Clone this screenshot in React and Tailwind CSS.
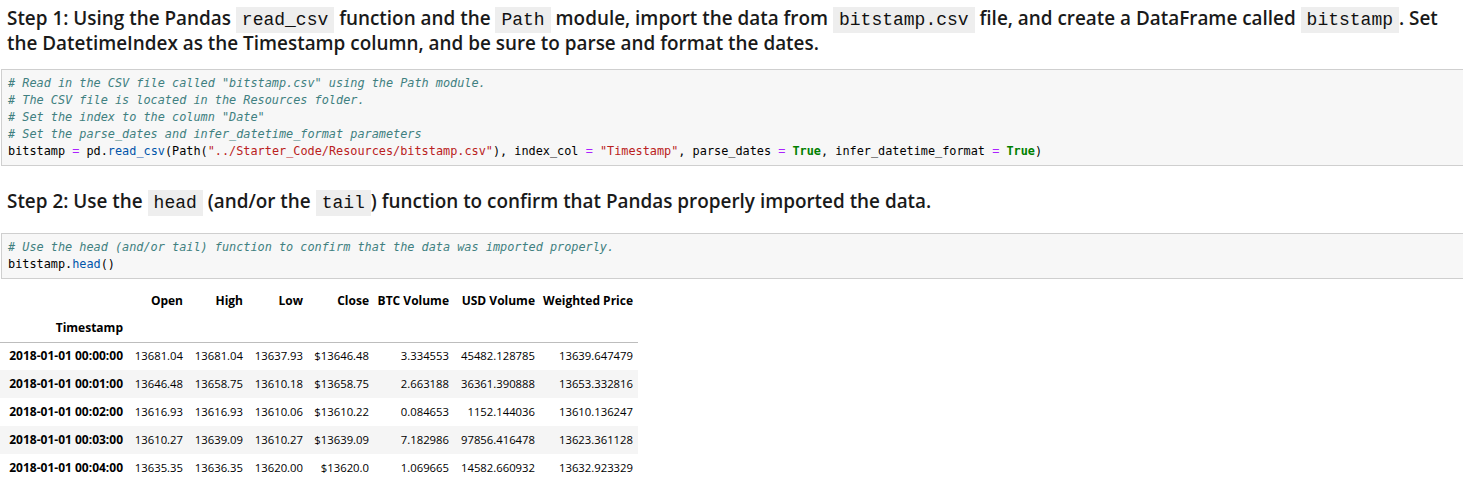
import React from 'react';

const mono = { fontFamily: '"DejaVu Sans Mono", "Liberation Mono", monospace' };
const headMono = { fontFamily: '"Liberation Mono", "DejaVu Sans Mono", monospace' };

const C = ({ children }) => (
  <code className="bg-[#eeeeee] px-[6px] py-[3px] text-[18px] leading-none font-normal text-[#111]" style={headMono}>
    {children}
  </code>
);

// syntax pieces
const Cm = ({ children }) => <span className="italic text-[#408080]">{children}</span>;
const Op = ({ children }) => <span className="text-[#aa22ff]">{children}</span>;
const Str = ({ children }) => <span className="text-[#ba2121]">{children}</span>;
const Kw = ({ children }) => <span className="font-bold text-[#008000]">{children}</span>;
const Pr = ({ children }) => <span className="text-[#0055aa]">{children}</span>;

const cols = ['Open', 'High', 'Low', 'Close', 'BTC Volume', 'USD Volume', 'Weighted Price'];
const widths = ['w-[60px]', 'w-[60px]', 'w-[60px]', 'w-[66px]', 'w-[80px]', 'w-[86px]', 'w-[98px]'];

const rows = [
  ['2018-01-01 00:00:00', '13681.04', '13681.04', '13637.93', '$13646.48', '3.334553', '45482.128785', '13639.647479'],
  ['2018-01-01 00:01:00', '13646.48', '13658.75', '13610.18', '$13658.75', '2.663188', '36361.390888', '13653.332816'],
  ['2018-01-01 00:02:00', '13616.93', '13616.93', '13610.06', '$13610.22', '0.084653', '1152.144036', '13610.136247'],
  ['2018-01-01 00:03:00', '13610.27', '13639.09', '13610.27', '$13639.09', '7.182986', '97856.416478', '13623.361128'],
  ['2018-01-01 00:04:00', '13635.35', '13636.35', '13620.00', '$13620.0', '1.069665', '14582.660932', '13632.923329'],
];

export default function App() {
  return (
    <div className="bg-white text-[#1a1a1a] w-[1463px] h-[496px] overflow-hidden" style={{ fontFamily: '"Open Sans", "Noto Sans", sans-serif' }}>
      {/* Step 1 heading */}
      <div className="pl-[7px] pt-[6px] text-[18.9px] leading-[25px] font-semibold whitespace-nowrap">
        <div className="h-[25px]">
          Step 1: Using the Pandas <C>read_csv</C> function and the <C>Path</C> module, import the data from <C>bitstamp.csv</C> file, and create a DataFrame called <C>bitstamp</C>. Set
        </div>
        <div className="h-[25px]">the DatetimeIndex as the Timestamp column, and be sure to parse and format the dates.</div>
      </div>

      {/* Code cell 1 */}
      <div className="mt-[13px] ml-[1px] bg-[#f7f7f7] border border-r-0 border-[#cfcfcf] pl-[6px] pt-[5px] pb-[5px] text-[11.85px] leading-[17px] text-black whitespace-pre" style={mono}>
        <div><Cm># Read in the CSV file called "bitstamp.csv" using the Path module.</Cm></div>
        <div><Cm># The CSV file is located in the Resources folder.</Cm></div>
        <div><Cm># Set the index to the column "Date"</Cm></div>
        <div><Cm># Set the parse_dates and infer_datetime_format parameters</Cm></div>
        <div>
          bitstamp <Op>=</Op> pd.<Pr>read_csv</Pr>(Path(<Str>"../Starter_Code/Resources/bitstamp.csv"</Str>), index_col <Op>=</Op> <Str>"Timestamp"</Str>, parse_dates <Op>=</Op> <Kw>True</Kw>, infer_datetime_format <Op>=</Op> <Kw>True</Kw>)
        </div>
      </div>

      {/* Step 2 heading */}
      <div className="pl-[7px] mt-[23px] h-[25px] text-[18.9px] leading-[25px] font-semibold whitespace-nowrap">
        Step 2: Use the <C>head</C> (and/or the <C>tail</C>) function to confirm that Pandas properly imported the data.
      </div>

      {/* Code cell 2 */}
      <div className="mt-[19px] ml-[1px] bg-[#f7f7f7] border border-r-0 border-[#cfcfcf] pl-[6px] pt-[5px] pb-[5px] text-[11.85px] leading-[17px] text-black whitespace-pre" style={mono}>
        <div><Cm># Use the head (and/or tail) function to confirm that the data was imported properly.</Cm></div>
        <div>bitstamp.<Pr>head</Pr>()</div>
      </div>

      {/* DataFrame output */}
      <table className="mt-[8px] border-collapse text-[12px] leading-[16px] text-black">
        <thead>
          <tr className="h-[28px]">
            <th className="w-[128px] p-0"></th>
            {cols.map((c, i) => (
              <th key={c} className={`${widths[i]} p-0 text-right font-bold pr-[5px] whitespace-nowrap`}>{c}</th>
            ))}
          </tr>
          <tr className="h-[27px] border-b border-[#bdbdbd]">
            <th className="p-0 text-right font-bold pr-[5px]">Timestamp</th>
            {cols.map((c) => <th key={c} className="p-0"></th>)}
          </tr>
        </thead>
        <tbody>
          {rows.map((r, i) => (
            <tr key={r[0]} className={`h-[28px] ${i % 2 === 1 ? 'bg-[#f5f5f5]' : ''}`}>
              <th className="p-0 text-right font-bold pl-[7px] pr-[5px] whitespace-nowrap">{r[0]}</th>
              {r.slice(1).map((v, j) => (
                <td key={j} className="p-0 text-right pr-[5px] text-[11.3px] whitespace-nowrap">{v}</td>
              ))}
            </tr>
          ))}
        </tbody>
      </table>
    </div>
  );
}
